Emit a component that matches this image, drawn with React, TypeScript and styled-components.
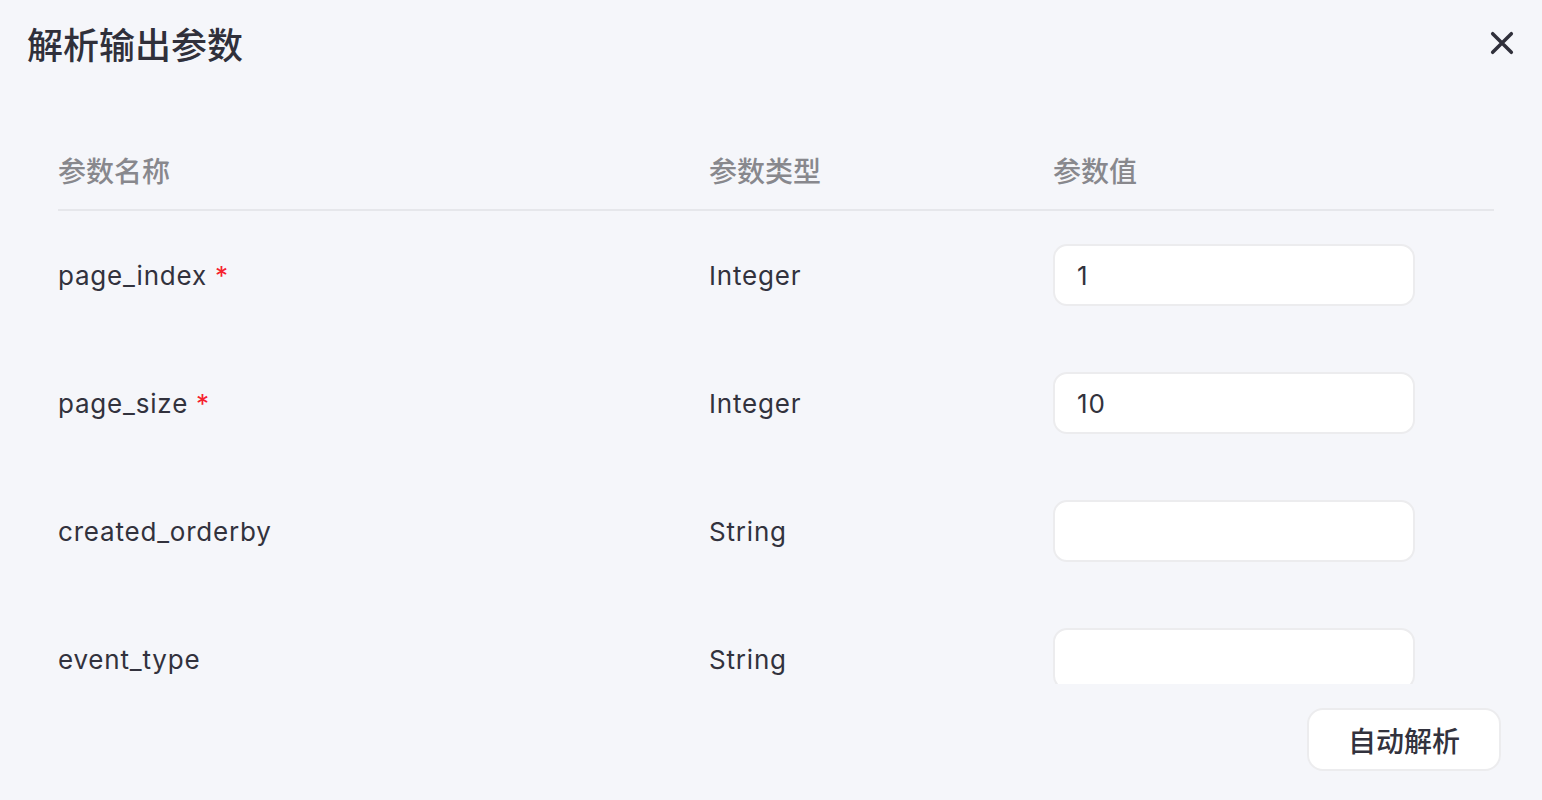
import React from 'react';
import styled, { createGlobalStyle } from 'styled-components';

const GlobalStyle = createGlobalStyle`
  html, body {
    margin: 0;
    padding: 0;
    background: #f5f6fa;
  }
  body {
    font-family: Inter, "Noto Sans CJK SC", sans-serif;
    color: #32323d;
  }
`;

const Panel = styled.div`
  width: 1542px;
  height: 800px;
  background: #f5f6fa;
  display: flex;
  flex-direction: column;
  box-sizing: border-box;
`;

const Header = styled.div`
  height: 86px;
  display: flex;
  align-items: center;
  justify-content: space-between;
  padding: 0 26px 0 27px;
`;

const Title = styled.h2`
  margin: 0;
  font-size: 36px;
  font-weight: 500;
  color: #30303b;
`;

const CloseButton = styled.button`
  width: 28px;
  height: 28px;
  padding: 0;
  border: none;
  background: transparent;
  display: flex;
  align-items: center;
  justify-content: center;
  cursor: pointer;
  color: #30303b;
`;

const ScrollArea = styled.div`
  height: 598px;
  overflow: hidden;
  margin: 0 48px 0 58px;
  padding-top: 45px;
  box-sizing: border-box;
`;

const Row = styled.div<{ $head?: boolean }>`
  display: grid;
  grid-template-columns: 651px 344px 1fr;
  align-items: center;
  height: ${(p) => (p.$head ? '78px' : '128px')};
  border-bottom: ${(p) => (p.$head ? '2px solid #e6e7eb' : 'none')};
`;

const HeadCell = styled.div`
  font-size: 28px;
  font-weight: 500;
  color: #88888d;
`;

const Cell = styled.div`
  font-size: 26px;
  font-weight: 400;
  letter-spacing: 0.8px;
  color: #32323d;
`;

const Required = styled.span`
  color: #f5222d;
  margin-left: 8px;
`;

const ValueInput = styled.input`
  width: 362px;
  height: 62px;
  box-sizing: border-box;
  border: 2px solid #ececee;
  border-radius: 14px;
  background: #fff;
  padding: 0 22px;
  font-family: Inter, "Noto Sans CJK SC", sans-serif;
  font-size: 26px;
  letter-spacing: 0.8px;
  color: #32323d;
  outline: none;
`;

const Footer = styled.div`
  display: flex;
  justify-content: flex-end;
  padding: 24px 41px 0 0;
`;

const ActionButton = styled.button`
  width: 194px;
  height: 63px;
  border: 2px solid #ececee;
  border-radius: 16px;
  background: #fff;
  font-family: Inter, "Noto Sans CJK SC", sans-serif;
  font-size: 28px;
  font-weight: 500;
  color: #32323d;
  cursor: pointer;
`;

type Param = { name: string; type: string; value: string; required?: boolean };

const params: Param[] = [
  { name: 'page_index', type: 'Integer', value: '1', required: true },
  { name: 'page_size', type: 'Integer', value: '10', required: true },
  { name: 'created_orderby', type: 'String', value: '' },
  { name: 'event_type', type: 'String', value: '' },
];

const App = () => {
  return (
    <Panel>
      <GlobalStyle />
      <Header>
        <Title>解析输出参数</Title>
        <CloseButton aria-label="close">
          <svg width="28" height="28" viewBox="0 0 24 24" fill="none">
            <path d="M4 4L20 20M20 4L4 20" stroke="currentColor" strokeWidth="3" strokeLinecap="round" />
          </svg>
        </CloseButton>
      </Header>
      <ScrollArea>
        <Row $head>
          <HeadCell>参数名称</HeadCell>
          <HeadCell>参数类型</HeadCell>
          <HeadCell>参数值</HeadCell>
        </Row>
        {params.map((p) => (
          <Row key={p.name}>
            <Cell>
              {p.name}
              {p.required && <Required>*</Required>}
            </Cell>
            <Cell>{p.type}</Cell>
            <div>
              <ValueInput defaultValue={p.value} />
            </div>
          </Row>
        ))}
      </ScrollArea>
      <Footer>
        <ActionButton>自动解析</ActionButton>
      </Footer>
    </Panel>
  );
};

export default App;
